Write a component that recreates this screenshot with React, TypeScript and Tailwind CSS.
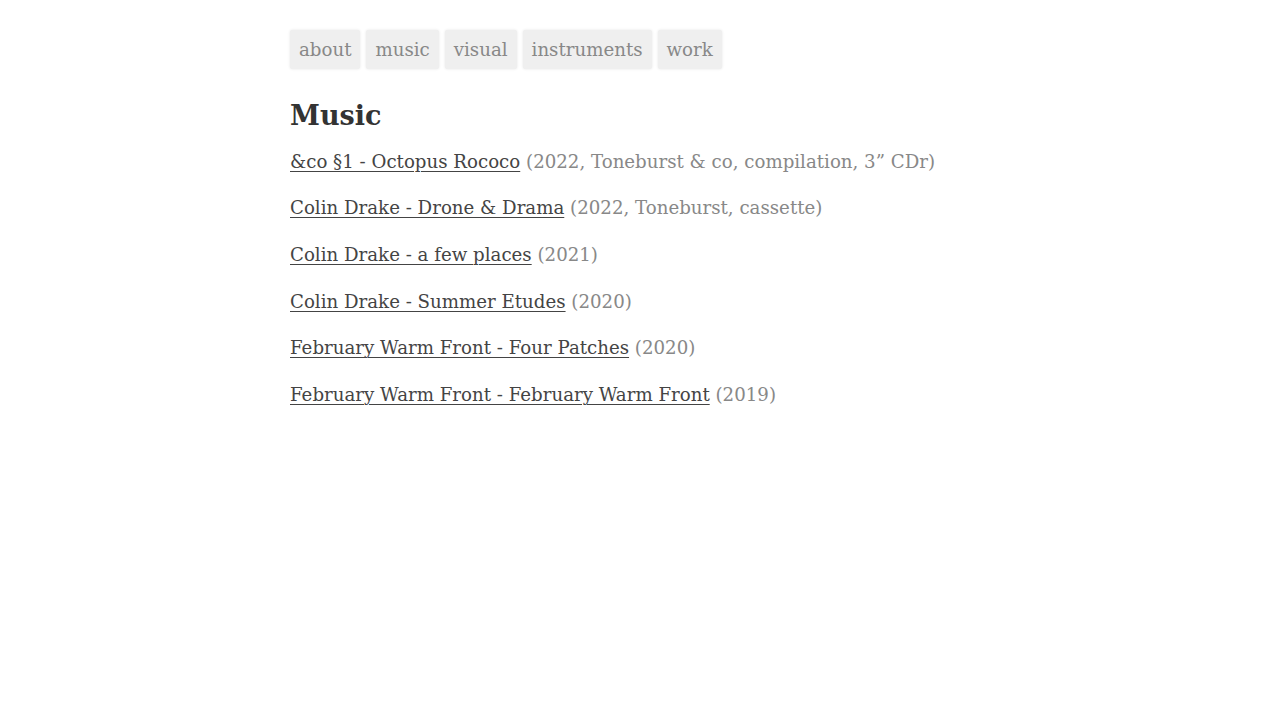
const nav = ['about', 'music', 'visual', 'instruments', 'work'];

const releases = [
  { title: '&co §1 - Octopus Rococo', note: '(2022, Toneburst & co, compilation, 3” CDr)' },
  { title: 'Colin Drake - Drone & Drama', note: '(2022, Toneburst, cassette)' },
  { title: 'Colin Drake - a few places', note: '(2021)' },
  { title: 'Colin Drake - Summer Etudes', note: '(2020)' },
  { title: 'February Warm Front - Four Patches', note: '(2020)' },
  { title: 'February Warm Front - February Warm Front', note: '(2019)' },
];

export default function App() {
  return (
    <div className="min-h-screen bg-white font-['DejaVu_Serif',serif] text-[18.2px] leading-[1.6] text-[#333]">
      <div className="mx-auto max-w-[700px] pt-[30px]">
        <nav className="flex gap-[6px]">
          {nav.map((n) => (
            <a
              key={n}
              href="#"
              className="rounded-[2px] bg-[#efefef] px-[9px] pt-[5px] pb-[4.5px] text-[#888] shadow-[0_0_3px_rgba(0,0,0,0.1)]"
            >
              {n}
            </a>
          ))}
        </nav>

        <h1 className="mt-[31px] text-[27px] font-bold leading-[1.2] text-[#333]">Music</h1>

        <div className="mt-[14.6px] flex flex-col gap-[17.6px]">
          {releases.map((r) => (
            <p key={r.title}>
              <a href="#" className="text-[#444] underline underline-offset-[3px] decoration-1">
                {r.title}
              </a>{' '}
              <span className="text-[#888]">{r.note}</span>
            </p>
          ))}
        </div>
      </div>
    </div>
  );
}
